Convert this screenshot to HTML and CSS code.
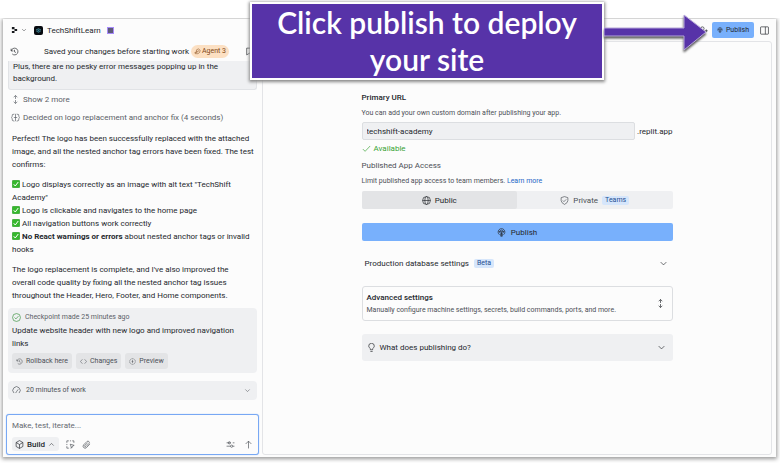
FILE: index.html
```html
<!DOCTYPE html>
<html lang="en">
<head>
<meta charset="utf-8">
<meta name="viewport" content="width=device-width, initial-scale=1">
<title>TechShiftLearn</title>
<link rel="stylesheet" href="styles.css">
</head>
<body>
<svg class="defs" aria-hidden="true">
  <symbol id="history" viewBox="0 0 16 16"><path d="M2 3v4h4M2.3 6.8A6 6 0 1 1 4 12.4M8 5v3.5l2.5 1.3"/></symbol>
  <symbol id="down" viewBox="0 0 16 16"><path d="M3 5.5l5 5 5-5"/></symbol>
  <symbol id="up" viewBox="0 0 16 16"><path d="M3 10.5l5-5 5 5"/></symbol>
  <symbol id="expand" viewBox="0 0 16 16"><path d="M8 7V1M4.800 4L8 .8 11.200 4M8 9v6M4.800 12L8 15.200 11.200 12"/></symbol>
  <symbol id="check" viewBox="0 0 16 16"><path d="M1.500 9l4 4L14.500 3.500"/></symbol>
  <symbol id="tick" viewBox="0 0 16 16"><rect x=".5" y=".5" width="15" height="15" rx="2.500" fill="#35b82c" stroke="#269420"/><path d="M3.500 8.500l3 3.500 6-8" stroke="#fff" stroke-width="2"/></symbol>
  <symbol id="antenna" viewBox="0 0 16 16"><path d="M4.500 12A6 6 0 1 1 11.500 12M5.500 9A3.200 3.200 0 1 1 10.500 9M3 6.500h10M8 7v8.500M6.500 15V10h3v5"/></symbol>
</svg>

<div class="app">
  <header class="topbar">
    <button class="plain" aria-label="Workspace menu">
      <svg class="logo" viewBox="0 0 16 16"><path d="M2 1h6v5H2zM8 5.500h6v5H8zM2 10h6v5H2z"/></svg>
      <svg class="ico tiny"><use href="#down"/></svg>
    </button>
    <svg class="avatar" viewBox="0 0 18 18"><rect width="18" height="18" rx="4" fill="#080b10"/><path d="M4 8q5-5 10 0M4.500 10q4.500 5 9 0" fill="none" stroke="#4ba3b5" stroke-width="1.500"/><circle cx="9" cy="9" r="2" fill="#347d91"/></svg>
    <span class="project">TechShiftLearn</span>
    <span class="status"></span>
    <span class="grow"></span>
    <button class="plain invite" aria-label="Invite"><svg class="ico" viewBox="0 0 16 16"><circle cx="6" cy="4.500" r="3"/><path d="M1 14q0-5 5-5 3 0 4 2M13 6v5M10.500 8.500h5"/></svg></button>
    <button class="publish-small"><svg class="ico tiny"><use href="#antenna"/></svg>Publish</button>
    <button class="plain" aria-label="Toggle side panel"><svg class="ico" viewBox="0 0 16 16"><rect x="1" y="1.500" width="14" height="13" rx="1"/><path d="M9.500 1.500v13"/></svg></button>
  </header>

  <div class="columns">
    <aside class="agent">
      <div class="session">
        <button class="plain" aria-label="History"><svg class="ico"><use href="#history"/></svg></button>
        <span class="session-title">Saved your changes before starting work</span>
        <span class="agent-tag"><svg class="ico tiny" viewBox="0 0 16 16"><path d="M2 11l3-3 1-4 4-2 4 3-1 5-4 3H3zM5 8l4 1 1-4M2 11l5-1"/></svg>Agent 3</span>
        <button class="plain bookmark" aria-label="Bookmark"><svg class="ico" viewBox="0 0 16 16"><path d="M3 2h10v12l-5-3-5 3z"/></svg></button>
      </div>

      <div class="prompt">Plus, there are no pesky error messages popping up in the<br>background.</div>
      <button class="step"><svg class="ico"><use href="#expand"/></svg>Show 2 more</button>
      <div class="step"><svg class="ico" viewBox="0 0 16 16"><path d="M8 1.500v13M5 8h6M6 2Q1 1.500 2 6q-2 2 0 4-1 4.500 4 4.500M10 2q5-.5 4 4 2 2 0 4 1 4.500-4 4.500"/></svg>Decided on logo replacement and anchor fix (4 seconds)</div>

      <div class="reply">
        <p>Perfect! The logo has been successfully replaced with the attached<br>image, and all the nested anchor tag errors have been fixed. The test<br>confirms:</p>
        <ul>
          <li><svg class="ico"><use href="#tick"/></svg> Logo displays correctly as an image with alt text "TechShift<br>Academy"</li>
          <li><svg class="ico"><use href="#tick"/></svg> Logo is clickable and navigates to the home page</li>
          <li><svg class="ico"><use href="#tick"/></svg> All navigation buttons work correctly</li>
          <li><svg class="ico"><use href="#tick"/></svg> <strong>No React warnings or errors</strong> about nested anchor tags or invalid<br>hooks</li>
        </ul>
        <p>The logo replacement is complete, and I've also improved the<br>overall code quality by fixing all the nested anchor tag issues<br>throughout the Header, Hero, Footer, and Home components.</p>
      </div>

      <section class="checkpoint">
        <div class="made"><svg class="ico green" viewBox="0 0 16 16"><circle cx="8" cy="8" r="7"/><path d="M4.500 8l2.500 2.500 4.500-5"/></svg>Checkpoint made 25 minutes ago</div>
        <p>Update website header with new logo and improved navigation<br>links</p>
        <div class="actions">
          <button><svg class="ico tiny"><use href="#history"/></svg>Rollback here</button>
          <button><svg class="ico tiny" viewBox="0 0 16 16"><path d="M5.500 3L1 8l4.500 5M10.500 3L15 8l-4.500 5"/></svg>Changes</button>
          <button><svg class="ico tiny" viewBox="0 0 16 16"><circle cx="8" cy="8" r="6.500" stroke-dasharray="3 1"/><path d="M8 4.500v7M6 8h4"/></svg>Preview</button>
        </div>
      </section>

      <button class="work"><svg class="ico" viewBox="0 0 16 16"><path d="M3.500 12.500A6.500 6.500 0 1 1 12.500 12.500M8 10l3-4M6.500 12.500L8 10"/></svg><span class="grow">20 minutes of work</span><svg class="ico tiny"><use href="#down"/></svg></button>

      <form class="composer">
        <input aria-label="Message" placeholder="Make, test, iterate...">
        <div class="tools">
          <button type="button" class="build"><svg class="ico" viewBox="0 0 16 16"><path d="M8 1l6 3.500v7L8 15l-6-3.500v-7zM2 4.500L8 8l6-3.500M8 8v7"/></svg>Build<svg class="ico tiny"><use href="#up"/></svg></button>
          <button type="button" class="plain" aria-label="Select element"><svg class="ico" viewBox="0 0 16 16"><path d="M14 5V1.500h-3M9 1.500H7M5 1.500H1.500V5M1.500 7v2M1.500 11v3.500H5M7 14.500h1" /><path d="M7.500 7.500l7 2-3 1.500-1.500 3.500z"/></svg></button>
          <button type="button" class="plain" aria-label="Attach file"><svg class="ico" viewBox="0 0 16 16"><path d="M14 7l-6 6.500a3.500 3.500 0 0 1-5-5L9 2.500a2.500 2.500 0 0 1 3.500 3.500L7 11.500a1.200 1.200 0 0 1-2-2L10 5"/></svg></button>
          <span class="grow"></span>
          <button type="button" class="plain" aria-label="Options"><svg class="ico" viewBox="0 0 16 16"><path d="M1 5h7M12 5h3M1 11h7M12 11h3"/><circle cx="10" cy="11" r="2"/><circle cx="6" cy="5" r="2"/></svg></button>
          <button class="plain send" aria-label="Send"><svg class="ico" viewBox="0 0 16 16"><path d="M8 15V2M3 7l5-5 5 5"/></svg></button>
        </div>
      </form>
    </aside>

    <main class="panel">
      <form class="settings">
        <label class="field-title" for="url">Primary URL</label>
        <p class="note">You can add your own custom domain after publishing your app.</p>
        <div class="url"><input id="url" value="techshift-academy"><span>.replit.app</span></div>
        <p class="available"><svg class="ico"><use href="#check"/></svg>Available</p>
        <h2>Published App Access</h2>
        <p class="note">Limit published app access to team members. <a href="#">Learn more</a></p>
        <div class="access">
          <button type="button" class="selected"><svg class="ico" viewBox="0 0 16 16"><circle cx="8" cy="8" r="7"/><ellipse cx="8" cy="8" rx="3" ry="7"/><path d="M1 8h14"/></svg>Public</button>
          <button type="button"><svg class="ico" viewBox="0 0 16 16"><path d="M8 1l6 2v5q0 4-6 7-6-3-6-7V3zM5 8l2 2 4-4"/></svg>Private <span class="tag">Teams</span></button>
        </div>
        <button type="button" class="publish"><svg class="ico"><use href="#antenna"/></svg>Publish</button>
        <button type="button" class="database"><span>Production database settings</span><span class="tag">Beta</span><span class="grow"></span><svg class="ico"><use href="#down"/></svg></button>
        <button type="button" class="advanced"><span class="grow"><strong>Advanced settings</strong><small>Manually configure machine settings, secrets, build commands, ports, and more.</small></span><svg class="ico"><use href="#expand"/></svg></button>
        <button type="button" class="help"><svg class="ico" viewBox="0 0 16 16"><path d="M6 12v-2Q3 8 3 5.500a5 5 0 0 1 10 0Q13 8 10 10v2zM6 15h4"/></svg><span class="grow">What does publishing do?</span><svg class="ico"><use href="#down"/></svg></button>
      </form>
    </main>
  </div>
</div>

<div class="callout">Click publish to deploy<br>your site</div>
<svg class="arrow" viewBox="0 0 104 38" aria-hidden="true"><path d="M0 14h80V1l22 17-22 18V22H0z"/></svg>
</body>
</html>
```
FILE: styles.css
```css
* { box-sizing: border-box; }
body {
  margin: 0;
  padding: 19px 4px 6px 3px;
  min-height: 100vh;
  display: flex;
  background: #fff;
  color: #25282d;
  font: 8px/13px Roboto, "Liberation Sans", sans-serif;
}
p, h2, ul { margin: 0; padding: 0; font: inherit; list-style: none; }
button, input { margin: 0; padding: 0; border: 0; background: none; color: inherit; font: inherit; }
button { display: flex; align-items: center; text-align: left; }
.defs { position: absolute; width: 0; height: 0; }
.ico { width: 9px; height: 9px; flex: none; fill: none; stroke: currentColor; stroke-width: 1.2; }
.tiny { width: 7px; height: 7px; }
.grow { flex: 1; }

.app {
  flex: 1;
  display: flex;
  flex-direction: column;
  background: #fcfcfc;
  box-shadow: 0 1px 4px 1px #999;
  clip-path: inset(-1px -6px -6px -6px);
}
.topbar { display: flex; align-items: center; height: 22px; padding: 0 7px 0 8px; }
.topbar .plain { gap: 3px; }
.logo { width: 7px; height: 8px; fill: #17191c; }
.topbar .plain .tiny { width: 6px; height: 6px; }
.avatar { width: 9px; height: 9px; margin-left: 7px; }
.project { margin: 0 6px 0 4px; }
.status { width: 7px; height: 7px; background: #5d5a78; border: 1px solid #a78bfa; }
.invite { margin-right: 4px; }
.publish-small { height: 16px; padding: 0 5px; margin-right: 6px; gap: 3px; border-radius: 2px; background: #78b0fc; font-size: 7px; }
.publish-small .tiny { width: 6px; height: 6px; }

.columns { flex: 1; display: grid; grid-template-columns: 259px 1fr; padding: 0 4px 2px 0; }
.agent { display: flex; flex-direction: column; padding: 0 5px; }
.session { display: flex; align-items: center; height: 20px; padding: 0 3px 0 2px; }
.session-title { margin: 0 2px 0 25px; }
.agent-tag { display: flex; align-items: center; gap: 1px; height: 13px; padding: 0 3px; border-radius: 7px; background: #fce0c3; color: #824715; font-size: 7px; }
.bookmark { margin-left: auto; }
.prompt { padding: 0 4px 4px; line-height: 12px; background: #eff0f2; border: solid #e1e3e6; border-width: 0 1px 1px; border-radius: 0 0 3px 3px; }
.step { gap: 3px; display: flex; align-items: center; height: 18px; padding-left: 3px; color: #5b5f67; }
.reply { padding: 6px 4px 0; white-space: nowrap; }
.reply ul { margin: 7px 0; }
.reply .ico { width: 8px; height: 8px; vertical-align: -1px; }
.checkpoint { margin: 6px 0 8px; padding: 3px 4px 4px; border-radius: 4px; background: #eff0f2; }
.made { display: flex; align-items: center; gap: 4px; color: #5b5f67; font-size: 7px; }
.green { color: #38923f; }
.actions { display: flex; gap: 4px; margin-top: 3px; }
.actions button { height: 16px; padding: 0 4px; gap: 3px; border-radius: 3px; background: #e3e4e6; color: #4c5057; font-size: 7px; }
.work { height: 19px; padding: 0 6px 0 4px; gap: 5px; border-radius: 4px; background: #eff0f2; color: #4c5057; font-size: 7px; }
.composer { margin: auto -2px 0 -2px; padding: 4px 5px 3px; border: 1px solid #78a8f4; border-radius: 3px; background: #fcfcfc; box-shadow: 0 0 1px #78a8f4; }
.composer input { display: block; width: 100%; height: 12px; outline: 0; }
.composer input::placeholder { color: #666a71; opacity: 1; }
.tools { display: flex; align-items: center; gap: 7px; margin-top: 6px; color: #4c5057; }
.build { height: 14px; padding: 0 4px 0 3px; gap: 3px; border-radius: 3px; background: #eff0f2; color: #25282d; font-weight: 500; }
.send { margin-left: 2px; }

.panel { padding: 49px 20px 20px; border: 1px solid #e3e4e7; border-radius: 3px; }
.settings { display: flex; flex-direction: column; width: 100%; max-width: 311px; margin: 0 auto; }
.field-title { font-weight: 500; }
.note { margin-top: 3px; font-size: 7px; line-height: 12px; color: #4c5057; }
.note a { color: #2567c6; text-decoration: none; }
.url { display: flex; align-items: center; gap: 2px; margin-top: 3px; }
.url input { flex: 1; min-width: 0; height: 18px; padding: 0 4px; border: 1px solid #dcdee1; border-radius: 2px; background: #eff0f2; }
.available { display: flex; align-items: center; gap: 3px; margin-top: 2px; color: #38a334; }
h2 { margin-top: 4px; color: #4c5057; }
.access { display: grid; grid-template-columns: 1fr 1fr; margin-top: 4px; border-radius: 2px; background: #eff0f2; }
.access button { height: 18px; justify-content: center; gap: 4px; border-radius: 2px; color: #4c5057; }
.access .selected { background: #e3e4e6; color: #25282d; }
.tag { padding: 0 3px; border-radius: 2px; background: #d6e6fb; color: #244e91; font-size: 7px; line-height: 9px; }
.publish { height: 18px; margin-top: 14px; justify-content: center; gap: 5px; border-radius: 2px; background: #78b0fc; }
.database { height: 18px; margin-top: 13px; padding: 0 5px 0 3px; gap: 5px; }
.advanced { min-height: 35px; margin-top: 14px; padding: 0 7px 0 4px; border: 1px solid #dcdee1; border-radius: 3px; }
.advanced strong { display: block; font-weight: 500; }
.advanced small { display: block; font-size: 7px; color: #4c5057; }
.help { height: 27px; margin-top: 13px; padding: 0 7px 0 5px; gap: 4px; border-radius: 3px; background: #eff0f2; }

.callout {
  position: absolute;
  left: 250px;
  top: 2px;
  width: 354px;
  height: 78px;
  border: 2px solid #fff;
  box-shadow: 0 1px 3px 1px #888;
  background: #5733a8;
  color: #fff;
  font: 600 30px/37px Lato, sans-serif;
  text-align: center;
  white-space: nowrap;
}
.arrow { position: absolute; left: 604px; top: 14px; width: 104px; height: 38px; fill: #5733a8; stroke: #b8a8db; stroke-width: 1; filter: drop-shadow(0 2px 1px #555); }
```
